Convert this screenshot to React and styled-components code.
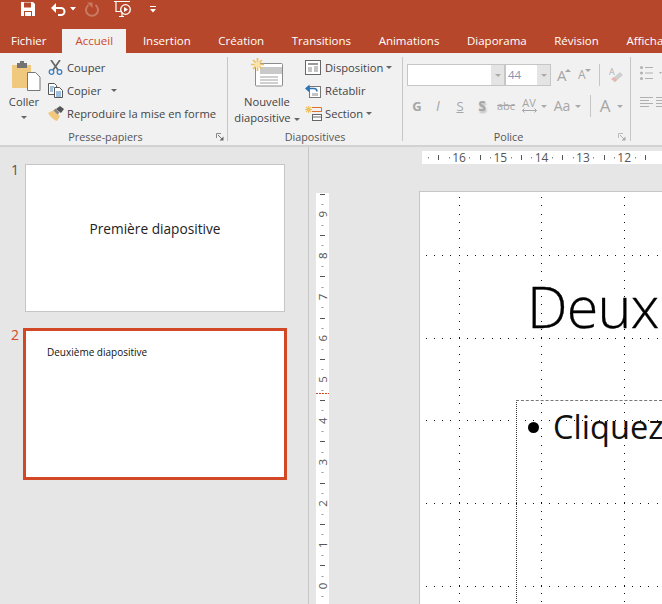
import React from "react";
import styled, { createGlobalStyle } from "styled-components";

const Global = createGlobalStyle`
  html, body { margin: 0; padding: 0; background: #e6e6e6; }
  body { width: 662px; height: 604px; overflow: hidden; font-family: "Open Sans", "Noto Sans", sans-serif; }
`;

const Page = styled.div`
  width: 662px; height: 604px; display: flex; flex-direction: column; overflow: hidden; background: #e6e6e6;
`;
const TitleBar = styled.div`
  height: 27px; background: #b7472a; display: flex; align-items: flex-start; flex: none;
  svg { display: block; flex: none; }
`;
const QatSlot = styled.div`
  margin-left: ${p => p.$ml}px; height: 18px; display: flex; align-items: center;
`;
const TabBar = styled.div`
  height: 26px; background: #b7472a; display: flex; flex: none; align-items: flex-end; white-space: nowrap; overflow: hidden;
`;
const Tab = styled.div`
  height: 24px; line-height: 24px; padding: 0 ${p => p.$pad ?? 13.8}px; margin-left: ${p => p.$ml ?? 0}px; font-size: 11.5px; flex: none;
  color: ${p => (p.$active ? "#d2492a" : "#fff")};
  background: ${p => (p.$active ? "#f1f1f1" : "transparent")};
`;
const Ribbon = styled.div`
  height: 92px; background: #f1f1f1; border-bottom: 2px solid #d2d2d2; display: flex; flex: none; color: #444; font-size: 11.2px; overflow: hidden;
`;
const Group = styled.div`
  width: ${p => p.$w}px; flex: none; height: 92px; position: relative; display: flex; flex-direction: column; 
`;
const GroupBody = styled.div`
  height: 76px; display: flex;
`;
const GroupLabel = styled.div`
  height: 16px; line-height: 15px; font-size: 10.8px; color: #555; text-align: center; padding-right: ${p => p.$pr ?? 0}px;
`;
const Launcher = styled.span`
  position: absolute; right: ${p => p.$r}px; bottom: 4px; width: 8px; height: 8px; line-height: 0; opacity: ${p => (p.$off ? 0.5 : 1)};
`;
const Sep = styled.div`
  width: 1px; flex: none; height: 84px; margin-top: 4px; background: #c6c6c6;
`;
const BigButton = styled.div`
  width: ${p => p.$w}px; margin-left: ${p => p.$ml}px; display: flex; flex-direction: column; align-items: center; text-align: center; line-height: 16px; flex: none;
  svg { display: block; margin-top: ${p => p.$iconTop}px; margin-left: ${p => p.$iconShift ?? 0}px; }
`;
const BigLabel = styled.div`
  margin-top: ${p => p.$mt}px; white-space: nowrap;
`;
const Caret = styled.i`
  display: inline-block; width: 0; height: 0; border-left: 3px solid transparent; border-right: 3px solid transparent;
  border-top: 3px solid ${p => p.$c ?? "#666"}; margin-left: ${p => p.$ml ?? 3}px; vertical-align: middle; flex: none;
`;
const Coller = styled(Caret)`
  margin-top: 6px;
`;
const SmallCol = styled.div`
  display: flex; flex-direction: column; margin-left: ${p => p.$ml}px; padding-top: 3px;
`;
const SmallBtn = styled.div`
  height: 23px; display: flex; align-items: center; white-space: nowrap; flex: none;
  svg { display: block; flex: none; margin-right: ${p => p.$gap ?? 4}px; }
`;
const PoliceCol = styled.div`
  display: flex; flex-direction: column; padding: 11px 0 0 4px;
`;
const PoliceRow = styled.div`
  display: flex; align-items: center; height: 22px;
`;
const Combo = styled.div`
  height: 20px; width: ${p => p.$w}px; border: 1px solid #c6c6c6; background: #fff; margin-left: ${p => p.$ml ?? 0}px; display: flex; flex: none; font-size: 11.5px; color: #8b93ad; line-height: 20px;
`;
const ComboText = styled.div`
  flex: 1; padding-left: 2px;
`;
const ComboArrow = styled.div`
  width: 13px; background: #e4e4e4; display: flex; align-items: center; justify-content: center;
`;
const ThinSep = styled.div`
  width: 1px; height: ${p => p.$h}px; background: #c6c6c6; margin-left: ${p => p.$ml}px; flex: none;
`;
const IconSlot = styled.span`
  margin-left: ${p => p.$ml}px; line-height: 0; flex: none;
`;
const FmtRow = styled.div`
  display: flex; align-items: center; height: 24px; margin-top: 8px; color: #a6a6a6; position: relative; flex: none;
`;
const Fmt = styled.span`
  width: ${p => p.$w}px; margin-left: ${p => p.$ml ?? 0}px; text-align: center; flex: none; white-space: nowrap; line-height: 24px;
  font-size: ${p => p.$fs ?? 13}px; font-weight: ${p => p.$fw ?? 400}; font-style: ${p => p.$it ? "italic" : "normal"};
  text-decoration: ${p => p.$u ? "underline" : p.$st ? "line-through" : "none"};
  text-shadow: ${p => p.$sh ? "1px 2px 2px #bbb" : "none"};
`;
const Spacing = styled.span`
  width: 16px; margin-left: 6px; flex: none; display: flex; flex-direction: column; align-items: center; font-size: 11px; line-height: 11px; margin-top: -2px;
  svg { display: block; }
`;
const GrowA = styled.span`
  font-size: ${p => p.$fs}px; color: #a6a6a6; margin-left: ${p => p.$ml}px; width: ${p => p.$w}px; flex: none; line-height: 22px; position: relative;
`;
const GrowTip = styled.i`
  position: absolute; right: 0; top: 5px; width: 0; height: 0; border-left: 3px solid transparent; border-right: 3px solid transparent;
  ${p => p.$up ? "border-bottom: 3px solid #a6a6a6;" : "border-top: 3px solid #a6a6a6;"}
`;
const ParaCol = styled.div`
  display: flex; flex-direction: column; padding: 13px 0 0 9px; gap: 17px;
  svg { display: block; }
`;
const Body = styled.div`
  flex: 1; display: flex; min-height: 0; overflow: hidden;
`;
const Side = styled.div`
  width: 308px; flex: none; border-right: 1px solid #c6c6c6; box-sizing: content-box; padding-top: 17px; background: #e6e6e6;
`;
const ThumbRow = styled.div`
  display: flex; height: ${p => p.$h}px; position: relative;
`;
const ThumbNum = styled.div`
  width: ${p => p.$selected ? 23 : 25}px; padding-left: 11px; box-sizing: border-box; flex: none; font-size: 14px; line-height: 16px; margin-top: ${p => p.$selected ? -1 : -2}px;
  color: ${p => (p.$selected ? "#d24726" : "#555")};
`;
const Thumb = styled.div`
  box-sizing: border-box; background: #fff; flex: none; display: flex;
  width: ${p => (p.$selected ? 264 : 260)}px; height: ${p => (p.$selected ? 152 : 148)}px;
  border: ${p => (p.$selected ? "3px solid #d24726" : "1px solid #c6c6c6")};
`;
const ThumbTitle = styled.div`
  margin: auto; font-size: 13.7px; color: #222; transform: translateY(-10px);
`;
const ThumbText = styled.div`
  margin: 14px 0 0 21px; font-size: 10px; color: #111; line-height: 14px; white-space: nowrap;
`;
const Work = styled.div`
  flex: 1; min-width: 0; padding-top: 4px; display: flex; flex-direction: column; background: #e6e6e6;
`;
const HRulerBox = styled.div`
  margin-left: 113px; height: 13px; flex: none; svg { display: block; overflow: visible; }
`;
const WorkRow = styled.div`
  flex: 1; display: flex; padding-top: 27px; min-height: 0;
`;
const VRulerBox = styled.div`
  margin: 2px 0 0 7px; width: 13px; flex: none; svg { display: block; overflow: visible; }
`;
const Slide = styled.div`
  margin-left: 90px; flex: 1; position: relative; background: #fff; border-top: 1px solid #c6c6c6; border-left: 1px solid #c6c6c6; overflow: hidden; min-width: 0;
`;
const GridLayer = styled.svg`
  position: absolute; left: 0; top: 0; width: 243px; height: 413px; pointer-events: none;
`;
const SlideTitle = styled.div`
  position: relative; padding: 76px 0 0 107px; height: 132px; box-sizing: border-box; font-family: "Open Sans", sans-serif; font-weight: 300; font-size: 57.5px; letter-spacing: -0.8px; line-height: 76px; color: #000; white-space: nowrap;
  -webkit-text-stroke: 0.3px #000;
`;
const BodyBox = styled.div`
  position: relative; margin-left: 96px; height: 260px; border-top: 1px dashed #777; border-left: 1px dotted #333; margin-top: 76px; display: flex; padding: 4px 0 0 11px; white-space: nowrap;
`;
const BodyBullet = styled.i`
  width: 11px; height: 11px; border-radius: 50%; background: #000; margin-top: 17px; flex: none;
`;
const BodyText = styled.div`
  margin-left: 14px; font-size: 32.6px; line-height: 44px; color: #111;
`;

const Save = () => (
  <svg width="16" height="16" viewBox="0 0 16 16"><path d="M1 1h12l2 2v12H1z" fill="#fff"/><path d="M4 1.500h7v5H4z" fill="#b7472a"/><path d="M4 10h8v5H4z" fill="#b7472a"/><path d="M5 11h6v4H5z" fill="#fff"/></svg>
);
const Undo = () => (
  <svg width="16" height="16" viewBox="0 0 16 16" fill="none"><path d="M4 7h7a3.500 3.500 0 0 1 0 7H8" stroke="#fff" strokeWidth="2"/><path d="M1 7l5-5v10z" fill="#fff"/></svg>
);
const QatCaret = () => <svg width="6" height="4" viewBox="0 0 6 4"><path d="M0 0h6L3 3.500z" fill="#fff"/></svg>;
const Redo = () => (
  <svg width="14" height="16" viewBox="0 0 14 16" fill="none"><path d="M10.500 4a6 6 0 1 1-7 0" stroke="#c97a63" strokeWidth="2"/><path d="M2 1.500h5.500V7z" fill="#c97a63"/></svg>
);
const Present = () => (
  <svg width="18" height="18" viewBox="0 0 18 18" fill="none" stroke="#fff"><path d="M0 1.500h16M2 1.500v10h5M8 12v4M5 16.500h5" strokeWidth="1.200"/><circle cx="11.500" cy="9.500" r="4.800" strokeWidth="1.300"/><path d="M10 7l4 2.500-4 2.500z" fill="#fff" stroke="none"/></svg>
);
const Customize = () => (
  <svg width="6" height="7" viewBox="0 0 6 7"><path d="M0 0h6v1H0zM0 3h6L3 6.500z" fill="#fff"/></svg>
);
const Paste = () => (
  <svg width="29" height="30" viewBox="0 0 29 30"><path d="M0 4h19v23H1a1 1 0 0 1-1-1z" fill="#f0c87e"/><path d="M5 2h3V0h4v2h3v5H5z" fill="#737373"/><path d="M15.500 11.500h8l4.500 4.500V29.500H15.500z" fill="#fff" stroke="#777"/></svg>
);
const Scissors = () => (
  <svg width="15" height="15" viewBox="0 0 15 15" fill="none"><path d="M3 0l7 10M12 0L5 10" stroke="#666" strokeWidth="1.700"/><circle cx="3.500" cy="12" r="2.300" stroke="#3f7fbf" strokeWidth="1.300"/><circle cx="11.500" cy="12" r="2.300" stroke="#3f7fbf" strokeWidth="1.300"/></svg>
);
const Copy = () => (
  <svg width="15" height="15" viewBox="0 0 15 15" fill="none"><path d="M.5.500h6l2 2v9H.5z" fill="#fff" stroke="#555"/><path d="M6.500 4.500h5l3 3v7h-8z" fill="#fff" stroke="#555"/><path d="M2 4h4M2 6h3M2 8h3M8 9h5M8 11h5M8 13h5" stroke="#3f7fbf"/></svg>
);
const Brush = () => (
  <svg width="16" height="15" viewBox="0 0 16 15"><path d="M0 7l6-3 6 6-3 5C5 14 2 10 0 7z" fill="#f0c87e"/><path d="M5.500 4.500l2-2 4 4-2 2z" fill="#888"/><path d="M8 3l4-3 4 3-3 4z" fill="#555"/></svg>
);
const NewSlide = () => (
  <svg width="32" height="29" viewBox="0 0 32 29" fill="none"><rect x="4.500" y="5.500" width="27" height="22.500" rx="1" fill="#fff" stroke="#8c8c8c"/><rect x="9" y="9" width="22" height="7" fill="#c9c9c9"/><path d="M9 19h18M9 22h18M9 25h18" stroke="#a0a0a0"/><g stroke="#f0c060" strokeWidth="1.700"><path d="M6.500 0v13M0 6.500h13M2 2l9 9M11 2l-9 9"/></g><circle cx="6.500" cy="6.500" r="2.800" fill="#fbe3a8"/></svg>
);
const Layout = () => (
  <svg width="16" height="15" viewBox="0 0 16 15" fill="none"><rect x=".5" y=".5" width="15" height="14" fill="#fff" stroke="#666"/><path d="M3 3h10v2H3z" fill="#9a9a9a"/><path d="M3 7h4v5H3z" fill="#c4c4c4"/><path d="M9 7h4M9 9h4M9 11h4" stroke="#888"/></svg>
);
const Reset = () => (
  <svg width="16" height="15" viewBox="0 0 16 15" fill="none"><rect x="4.500" y="3.500" width="11" height="11" fill="#fff" stroke="#777"/><path d="M7 10h6v3H7z" fill="#c4c4c4"/><path d="M2 5.500h7a3 3 0 0 1 3 3" stroke="#2f75b5" strokeWidth="1.600"/><path d="M0 5.500L4.500 1.500v8z" fill="#2f75b5"/></svg>
);
const SectionIcon = () => (
  <svg width="17" height="15" viewBox="0 0 17 15" fill="none"><g stroke="#f0c060" strokeWidth="1.100"><path d="M3.500 0v7M0 3.500h7M1 1l5 5M6 1l-5 5"/></g><path d="M7 1.500h9.500V5" stroke="#e07030" strokeWidth="1"/><path d="M7 5.500h10" stroke="#e07030"/><rect x="7.500" y="8.500" width="9" height="6" fill="#fff" stroke="#666"/><path d="M7 11h10" stroke="#666"/></svg>
);
const LauncherIcon = () => (
  <svg width="8" height="8" viewBox="0 0 8 8" fill="none"><path d="M.5 5V.5H5" stroke="#888"/><path d="M2 2l4 4" stroke="#777"/><path d="M7.500 3.500v4h-4z" fill="#666"/></svg>
);
const Eraser = () => (
  <svg width="15" height="17" viewBox="0 0 15 17"><path d="M6 15l8-7-3-3-8 7z" fill="#cfcfcf"/><path d="M2 12l4 3 2-2-3-3z" fill="#e6b7ad"/><text x="0" y="8" fontSize="9" fill="#b0b0b0" fontFamily="Open Sans">A</text></svg>
);
const AvArrow = () => (
  <svg width="15" height="5" viewBox="0 0 15 5" fill="none" stroke="#a6a6a6"><path d="M0 2.500h15M2.500 .5l-2 2 2 2M12.500 .5l2 2-2 2"/></svg>
);
const Bullets = () => (
  <svg width="22" height="14" viewBox="0 0 22 14"><g fill="#b0b0b0"><circle cx="1.500" cy="1.500" r="1.500"/><circle cx="1.500" cy="7" r="1.500"/><circle cx="1.500" cy="12.500" r="1.500"/></g><path d="M5 1.500h8M5 7h8M5 12.500h8" stroke="#b0b0b0"/><path d="M19 6h3l-1.500 2z" fill="#b0b0b0"/></svg>
);
const Align = () => (
  <svg width="22" height="11" viewBox="0 0 22 11"><path d="M0 .5h13M0 3.500h9M0 6.500h13M0 9.500h9M16 .5h6M16 3.500h6M16 6.500h6M16 9.500h6" stroke="#b0b0b0"/></svg>
);

const dotsX = [39, 121, 204];
const dotsY = [63, 146, 228, 311, 394];
const range = (a, b, s) => { const o = []; for (let v = a; v < b; v += s) o.push(v); return o; };
const Grid = () => (
  <GridLayer viewBox="0 0 243 413">
    <g fill="#111">
      {dotsX.map(x => range(5, 413, 8.25).map(y => <rect key={x + "-" + y} x={x} y={Math.round(y)} width="1" height="1" />))}
      {dotsY.map(y => range(5.5, 243, 8.25).map(x => <rect key={y + "_" + x} x={Math.round(x)} y={y} width="1" height="1" />))}
    </g>
  </GridLayer>
);

const U = 41.3;
const HRuler = () => {
  const X = n => 37 + (16 - n) * U;
  const nums = [16, 15, 14, 13, 12];
  const half = [16.5, 15.5, 14.5, 13.5, 12.5, 11.5];
  const quarter = [16.75, 16.25, 15.75, 15.25, 14.75, 14.25, 13.75, 13.25, 12.75, 12.25, 11.75];
  return (
    <svg width="240" height="13" viewBox="0 0 240 13">
      <rect width="240" height="13" fill="#fff" />
      {quarter.map(n => <rect key={n} x={Math.round(X(n))} y="6" width="1" height="1.500" fill="#888" />)}
      {half.map(n => <rect key={n} x={Math.round(X(n))} y="4" width="1" height="5" fill="#555" />)}
      {nums.map(n => <text key={n} x={X(n)} y="10.500" fontSize="12" textAnchor="middle" fill="#555" fontFamily="Open Sans">{n}</text>)}
    </svg>
  );
};
const VRuler = () => {
  const Y = n => 393 - n * U;
  const nums = [0, 1, 2, 3, 4, 5, 6, 7, 8, 9];
  const half = nums.map(n => n + 0.5);
  const quarter = nums.flatMap(n => [n - 0.25, n + 0.25]);
  return (
    <svg width="13" height="411" viewBox="0 0 13 411">
      <rect width="13" height="411" fill="#fff" />
      {quarter.map(n => <rect key={n} x="5.500" y={Math.round(Y(n))} width="2" height="1" fill="#999" />)}
      {half.map(n => <rect key={n} x="4" y={Math.round(Y(n))} width="5" height="1" fill="#555" />)}
      {nums.map(n => <text key={n} x="0" y="0" transform={`translate(10.500 ${Y(n)}) rotate(-90)`} fontSize="11.500" textAnchor="middle" fill="#555" fontFamily="Open Sans">{n}</text>)}
      <line x1="0" x2="13" y1="200.500" y2="200.500" stroke="#d24726" strokeDasharray="2 1" />
    </svg>
  );
};

export default function App() {
  return (
    <Page>
      <Global />
      <TitleBar>
        <QatSlot $ml={20}><Save /></QatSlot>
        <QatSlot $ml={14}><Undo /></QatSlot>
        <QatSlot $ml={4}><QatCaret /></QatSlot>
        <QatSlot $ml={9}><Redo /></QatSlot>
        <QatSlot $ml={15}><Present /></QatSlot>
        <QatSlot $ml={18}><Customize /></QatSlot>
      </TitleBar>
      <TabBar>
        <Tab $pad={11}>Fichier</Tab>
        <Tab $active $pad={13} $ml={5}>Accueil</Tab>
        <Tab $ml={3}>Insertion</Tab>
        <Tab>Création</Tab>
        <Tab>Transitions</Tab>
        <Tab>Animations</Tab>
        <Tab>Diaporama</Tab>
        <Tab>Révision</Tab>
        <Tab>Affichage</Tab>
      </TabBar>
      <Ribbon>
        <Group $w={227}>
          <GroupBody>
            <BigButton $w={36} $ml={6} $iconTop={8} $iconShift={5}>
              <Paste />
              <BigLabel $mt={3}>Coller</BigLabel>
              <Coller $ml={0} />
            </BigButton>
            <SmallCol $ml={6}>
              <SmallBtn><Scissors />Couper</SmallBtn>
              <SmallBtn><Copy />Copier<Caret $ml={10} /></SmallBtn>
              <SmallBtn $gap={3}><Brush />Reproduire la mise en forme</SmallBtn>
            </SmallCol>
          </GroupBody>
          <GroupLabel $pr={16}>Presse-papiers</GroupLabel>
          <Launcher $r={3}><LauncherIcon /></Launcher>
        </Group>
        <Sep />
        <Group $w={174}>
          <GroupBody>
            <BigButton $w={72} $ml={3} $iconTop={5}>
              <NewSlide />
              <BigLabel $mt={7}>Nouvelle<br />diapositive<Caret /></BigLabel>
            </BigButton>
            <SmallCol $ml={2}>
              <SmallBtn><Layout />Disposition<Caret /></SmallBtn>
              <SmallBtn><Reset />Rétablir</SmallBtn>
              <SmallBtn $gap={3}><SectionIcon />Section<Caret /></SmallBtn>
            </SmallCol>
          </GroupBody>
          <GroupLabel>Diapositives</GroupLabel>
        </Group>
        <Sep />
        <Group $w={227}>
          <GroupBody>
            <PoliceCol>
              <PoliceRow>
                <Combo $w={96}><ComboText /><ComboArrow><Caret $ml={0} $c="#aaa" /></ComboArrow></Combo>
                <Combo $w={44}><ComboText>44</ComboText><ComboArrow><Caret $ml={0} $c="#aaa" /></ComboArrow></Combo>
                <GrowA $fs={15} $ml={6} $w={14}>A<GrowTip $up /></GrowA>
                <GrowA $fs={12} $ml={7} $w={13}>A<GrowTip /></GrowA>
                <ThinSep $h={22} $ml={8} />
                <IconSlot $ml={9}><Eraser /></IconSlot>
              </PoliceRow>
              <FmtRow>
                <Fmt $w={14} $ml={3} $fw={700} $fs={13}>G</Fmt>
                <Fmt $w={14} $ml={7} $it $fs={14}>I</Fmt>
                <Fmt $w={14} $ml={8} $u $fs={13}>S</Fmt>
                <Fmt $w={14} $ml={8} $fw={700} $sh $fs={14}>S</Fmt>
                <Fmt $w={18} $ml={8} $st $fs={11}>abc</Fmt>
                <Spacing>AV<AvArrow /></Spacing>
                <Caret $c="#aaa" $ml={4} />
                <Fmt $w={18} $ml={6} $fs={14}>Aa</Fmt>
                <Caret $c="#aaa" $ml={4} />
                <ThinSep $h={22} $ml={9} />
                <Fmt $w={14} $ml={7} $fs={17}>A</Fmt>
                <Caret $c="#aaa" $ml={5} />
              </FmtRow>
            </PoliceCol>
          </GroupBody>
          <GroupLabel $pr={16}>Police</GroupLabel>
          <Launcher $r={4} $off><LauncherIcon /></Launcher>
        </Group>
        <Sep />
        <Group $w={31}>
          <ParaCol>
            <Bullets />
            <Align />
          </ParaCol>
        </Group>
      </Ribbon>
      <Body>
        <Side>
          <ThumbRow $h={164}>
            <ThumbNum>1</ThumbNum>
            <Thumb><ThumbTitle>Première diapositive</ThumbTitle></Thumb>
          </ThumbRow>
          <ThumbRow $h={152}>
            <ThumbNum $selected>2</ThumbNum>
            <Thumb $selected><ThumbText>Deuxième diapositive</ThumbText></Thumb>
          </ThumbRow>
        </Side>
        <Work>
          <HRulerBox><HRuler /></HRulerBox>
          <WorkRow>
            <VRulerBox><VRuler /></VRulerBox>
            <Slide>
              <Grid />
              <SlideTitle>Deuxième diapositive</SlideTitle>
              <BodyBox>
                <BodyBullet />
                <BodyText>Cliquez pour ajouter du texte</BodyText>
              </BodyBox>
            </Slide>
          </WorkRow>
        </Work>
      </Body>
    </Page>
  );
}
